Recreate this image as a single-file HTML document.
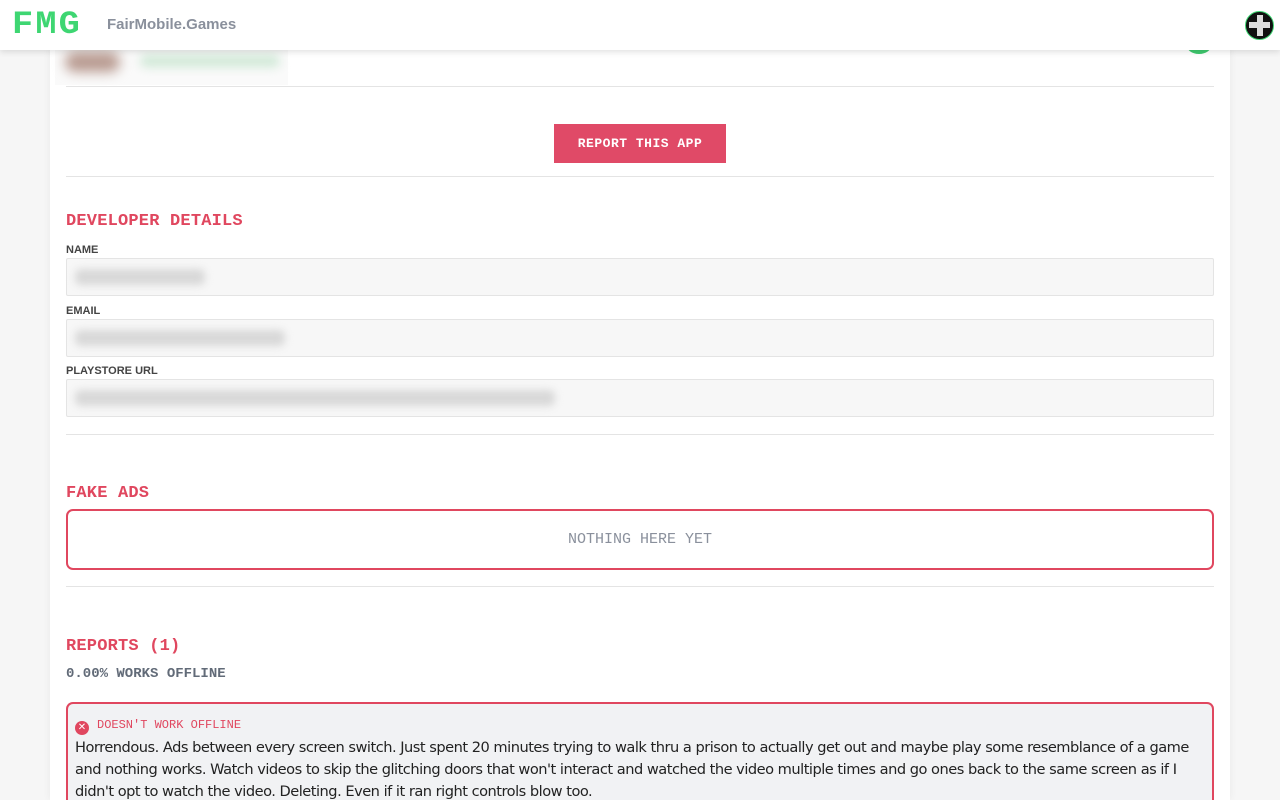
<!DOCTYPE html>
<html style="width:1280px;height:800px;overflow:hidden"><head><meta charset="utf-8"><style>
*{box-sizing:border-box;margin:0;padding:0}
body{width:1280px;height:800px;overflow:hidden;background:#f6f6f6;font-family:"Liberation Sans",sans-serif;position:relative}
.hdr{position:absolute;left:0;top:0;width:1280px;height:50px;background:#fff;box-shadow:0 2px 6px rgba(0,0,0,.12);z-index:5}
.logo{position:absolute;left:12px;top:10px;font-family:"Liberation Mono",monospace;font-weight:bold;font-size:32px;color:#3ed672;letter-spacing:2px;line-height:30px;transform:scaleX(1.1);transform-origin:left}
.site{position:absolute;left:107px;top:16px;font-size:15px;font-weight:bold;color:#8a909c}
.av{position:absolute;left:1245px;top:11px;width:29px;height:29px;border-radius:50%;background:#111;border:1.5px solid #3ed672;overflow:hidden}
.card{position:absolute;left:50px;top:0;width:1180px;height:800px;background:#fff;box-shadow:0 0 8px rgba(0,0,0,.06)}
.hr{position:absolute;left:66px;width:1148px;height:1px;background:#e4e4e4}
.btn{position:absolute;left:554px;top:124px;width:172px;height:39px;background:#e04a67;color:#fff;font-family:"Liberation Mono",monospace;font-weight:bold;font-size:13px;text-align:center;line-height:39px;letter-spacing:.5px}
.h{position:absolute;left:66px;font-family:"Liberation Mono",monospace;font-weight:bold;font-size:17px;color:#e0475f;letter-spacing:0.2px}
.lbl{position:absolute;left:66px;font-size:11px;font-weight:bold;color:#444}
.inp{position:absolute;left:66px;width:1148px;height:38px;background:#f7f7f7;border:1px solid #e4e4e4;border-radius:2px}
.blur{position:absolute;top:10px;left:8px;height:16px;background:#d8d8d8;filter:blur(4px);border-radius:6px}
</style></head><body>
<div class="card">
  <div style="position:absolute;left:5px;top:45px;width:233px;height:40px;background:#fafafa"></div>
  <div style="position:absolute;left:15px;top:52px;width:55px;height:20px;border-radius:10px;background:#b89a90;filter:blur(6px)"></div>
  <div style="position:absolute;left:90px;top:55px;width:140px;height:12px;border-radius:6px;background:#cfe8d6;filter:blur(5px)"></div>
  <div style="position:absolute;left:1136px;top:34px;width:26px;height:20px;border-radius:50%;background:#3ec96e"></div>
</div>
<div class="hr" style="top:86px"></div>
<div class="btn">REPORT THIS APP</div>
<div class="hr" style="top:176px"></div>
<div class="h" style="top:212px">DEVELOPER DETAILS</div>
<div class="lbl" style="top:244px">NAME</div>
<div class="inp" style="top:258px"><div class="blur" style="width:130px"></div></div>
<div class="lbl" style="top:305px">EMAIL</div>
<div class="inp" style="top:319px"><div class="blur" style="width:210px"></div></div>
<div class="lbl" style="top:365px">PLAYSTORE URL</div>
<div class="inp" style="top:379px"><div class="blur" style="width:480px"></div></div>
<div class="hr" style="top:434px"></div>
<div class="h" style="top:484px">FAKE ADS</div>
<div style="position:absolute;left:66px;top:509px;width:1148px;height:61px;border:2px solid #e0475f;border-radius:7px;text-align:center;line-height:57px;font-family:'Liberation Mono',monospace;font-size:15px;color:#8a909c">NOTHING HERE YET</div>
<div class="hr" style="top:586px"></div>
<div class="h" style="top:637px">REPORTS (1)</div>
<div style="position:absolute;left:66px;top:666px;font-family:'Liberation Mono',monospace;font-weight:bold;font-size:14px;color:#626b78">0.00% WORKS OFFLINE</div>
<div style="position:absolute;left:66px;top:702px;width:1148px;height:98px;border:2px solid #e0475f;border-bottom:none;border-radius:7px 7px 0 0;background:#f1f2f4;padding:11px 8px 0 7px;overflow:hidden">
  <div style="font-family:'Liberation Mono',monospace;font-size:12px;color:#e0475f;height:22px;line-height:20px"><span style="display:inline-block;width:14px;height:14px;border-radius:50%;background:#e0475f;color:#fff;font-size:10px;line-height:14px;text-align:center;vertical-align:-2px;margin-right:8px;font-family:'Liberation Sans'">✕</span>DOESN'T WORK OFFLINE</div>
  <div style="font-family:'DejaVu Sans',sans-serif;font-size:14.6px;line-height:22px;color:#222;letter-spacing:-0.5px">Horrendous. Ads between every screen switch. Just spent 20 minutes trying to walk thru a prison to actually get out and maybe play some resemblance of a game and nothing works. Watch videos to skip the glitching doors that won't interact and watched the video multiple times and go ones back to the same screen as if I didn't opt to watch the video. Deleting. Even if it ran right controls blow too.</div>
</div>
<div class="hdr">
  <div class="logo">FMG</div>
  <div class="site">FairMobile.Games</div>
  <div class="av"><div style="position:absolute;left:11px;top:3px;width:6px;height:21px;background:#ddd"></div><div style="position:absolute;left:3px;top:10px;width:21px;height:6px;background:#ddd"></div></div>
</div>
</body></html>
